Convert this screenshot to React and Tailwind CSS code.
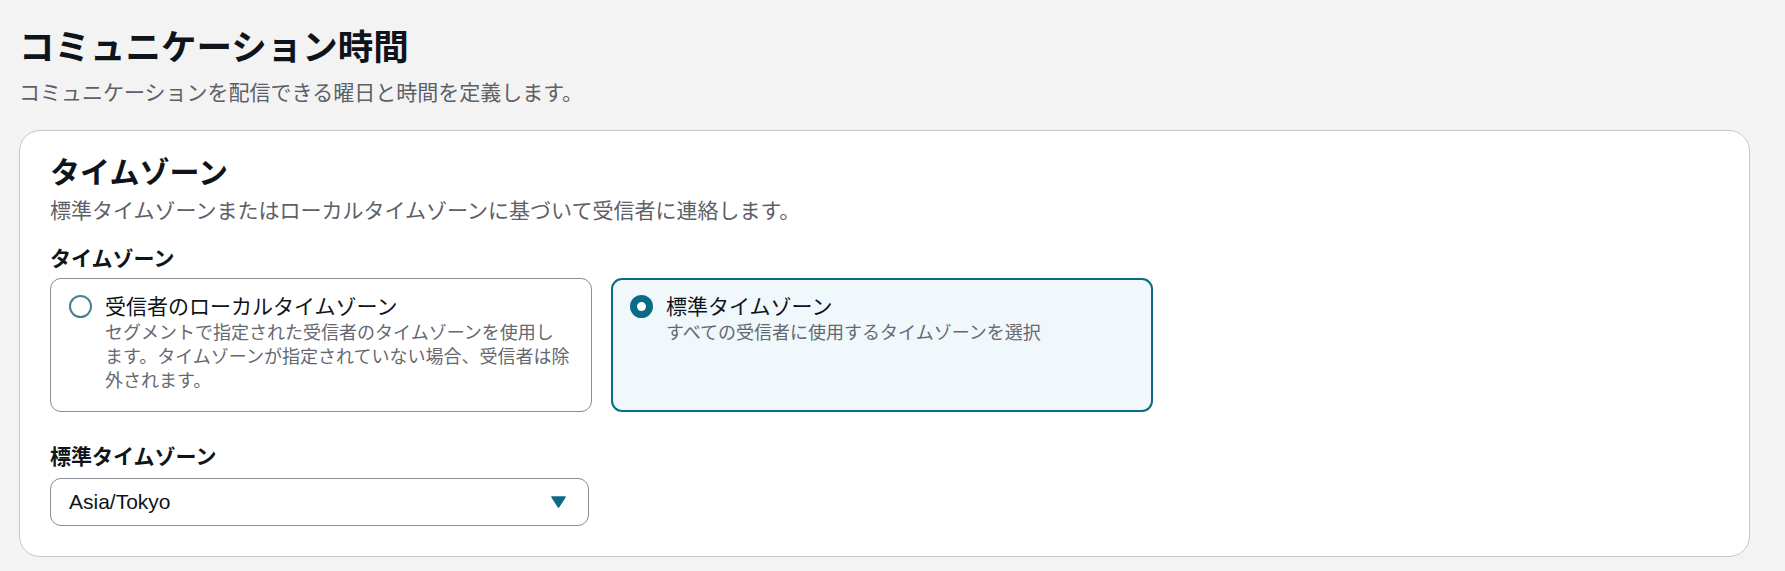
import React, { useState } from "react";

const options = [
  {
    value: "local",
    label: "受信者のローカルタイムゾーン",
    desc: [
      "セグメントで指定された受信者のタイムゾーンを使用し",
      "ます。タイムゾーンが指定されていない場合、受信者は除",
      "外されます。",
    ],
  },
  {
    value: "standard",
    label: "標準タイムゾーン",
    desc: ["すべての受信者に使用するタイムゾーンを選択"],
  },
];

const RadioTile = ({ option, checked, onSelect }) => (
  <div
    onClick={onSelect}
    className={
      checked
        ? "flex items-start gap-[13px] rounded-[11px] border-2 border-[#0b6b87] bg-[#f0f8fb] pl-[17px] pr-[10px] pt-[11px] pb-[19px] cursor-pointer"
        : "flex items-start gap-[13px] rounded-[11px] border border-[#8c8c94] bg-white pl-[18px] pr-[11px] pt-[12px] pb-[20px] cursor-pointer"
    }
  >
    <span
      className={
        checked
          ? "mt-[4px] w-[23px] h-[23px] shrink-0 rounded-full border-[7px] border-[#0b6b87] bg-white"
          : "mt-[4px] w-[23px] h-[23px] shrink-0 rounded-full border-2 border-[#47808f] bg-white"
      }
    />
    <div>
      <div className="text-[21px] leading-[28px] text-[#0f141a]">{option.label}</div>
      <div className="text-[18px] leading-[24px] text-[#656871] whitespace-nowrap">
        {option.desc.map((line, i) => (
          <div key={i}>{line}</div>
        ))}
      </div>
    </div>
  </div>
);

const App = () => {
  const [zone, setZone] = useState("standard");

  return (
    <div className="min-h-screen bg-[#f3f3f3] pl-[19px] pr-[35px] pt-[23px] pb-[14px] font-['Noto_Sans_CJK_JP',sans-serif]">
      <h1 className="text-[35.5px] leading-[44px] font-bold text-[#0f141a]">
        コミュニケーション時間
      </h1>
      <p className="mt-[10px] text-[21px] leading-[28px] text-[#5c6068]">
        コミュニケーションを配信できる曜日と時間を定義します。
      </p>

      <section className="mt-[25px] bg-white border border-[#c6c6cd] rounded-[21px] px-[30px] pt-[21px] pb-[30px]">
        <h2 className="text-[30px] leading-[36px] font-bold text-[#0f141a]">タイムゾーン</h2>
        <p className="mt-[7px] text-[21px] leading-[28px] text-[#5c6068]">
          標準タイムゾーンまたはローカルタイムゾーンに基づいて受信者に連絡します。
        </p>

        <div className="mt-[20px] text-[21px] leading-[28px] font-bold text-[#0f141a]">
          タイムゾーン
        </div>
        <div className="mt-[7px] grid grid-cols-[542px_542px] gap-[19px]">
          {options.map((o) => (
            <RadioTile
              key={o.value}
              option={o}
              checked={zone === o.value}
              onSelect={() => setZone(o.value)}
            />
          ))}
        </div>

        <div className="mt-[29px] text-[21px] leading-[28px] font-bold text-[#0f141a]">
          標準タイムゾーン
        </div>
        <div className="mt-[9px] w-[539px] h-[48px] flex items-center justify-between rounded-[11px] border border-[#8c8c94] bg-white pl-[18px] pr-[22px]">
          <span className="font-['Liberation_Sans',Arial,sans-serif] text-[21px] text-[#0f141a]">
            Asia/Tokyo
          </span>
          <svg width="15" height="12" viewBox="0 0 15 12">
            <path d="M1 1 L14 1 L7.5 11 Z" fill="#0b6b87" stroke="#0b6b87" strokeWidth="1.5" strokeLinejoin="round" />
          </svg>
        </div>
      </section>
    </div>
  );
};

export default App;
